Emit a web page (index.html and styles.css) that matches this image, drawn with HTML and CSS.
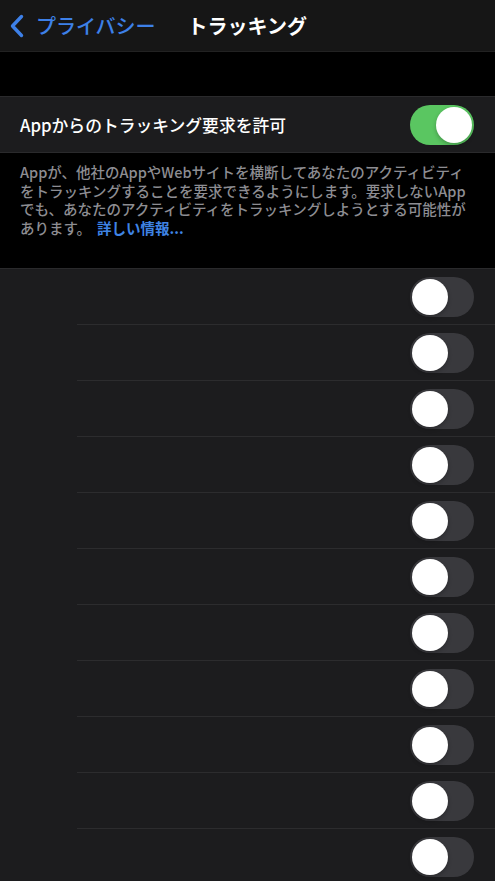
FILE: index.html
```html
<!DOCTYPE html>
<html lang="ja">
<head>
    <meta charset="UTF-8">
    <meta name="viewport" content="width=device-width, initial-scale=1.0">
    <title>トラッキング</title>
    <link rel="stylesheet" href="styles.css">
</head>
<body>
    <div class="navbar">
        <a class="back" href="#">
            <svg class="chevron" width="14" height="24" viewBox="0 0 14 24">
                <path d="M11.5 2.5 L2.5 12 L11.5 21.5" fill="none" stroke="#3d80e8" stroke-width="3.4" stroke-linecap="round" stroke-linejoin="round"/>
            </svg>
            <span>プライバシー</span>
        </a>
        <div class="title">トラッキング</div>
    </div>

    <div class="spacer"></div>

    <div class="group">
        <div class="row">
            <span class="label">Appからのトラッキング要求を許可</span>
            <div class="toggle on"><div class="knob"></div></div>
        </div>
    </div>

    <div class="note">
        Appが、他社のAppやWebサイトを横断してあなたのアクティビティをトラッキングすることを要求できるようにします。要求しないAppでも、あなたのアクティビティをトラッキングしようとする可能性があります。<a href="#">詳しい情報...</a>
    </div>

    <div class="group list" id="list"></div>

    <script>
        const list = document.getElementById("list");
        for (let i = 0; i < 11; i++) {
            const row = document.createElement("div");
            row.className = "row app";
            row.innerHTML = '<span class="label"></span><div class="toggle"><div class="knob"></div></div>';
            list.appendChild(row);
        }
    </script>
</body>
</html>
```

FILE: styles.css
```css
body {
    margin: 0;
    background-color: #000;
    font-family: "Noto Sans CJK JP", "Noto Sans", sans-serif;
    color: #fff;
    height: 881px;
    overflow: hidden;
}

.navbar {
    height: 51px;
    background-color: #161616;
    border-bottom: 1px solid #222;
    display: flex;
    align-items: center;
}

.back {
    display: flex;
    align-items: center;
    gap: 12px;
    padding-left: 10px;
    color: #3d80e8;
    text-decoration: none;
    font-size: 20px;
    font-weight: 500;
}

.title {
    margin-left: 32px;
    font-size: 20px;
    font-weight: 700;
}

.spacer {
    height: 44px;
}

.group {
    background-color: #1c1c1e;
    border-top: 1px solid #2a2a2c;
    border-bottom: 1px solid #2a2a2c;
}

.row {
    height: 55px;
    display: flex;
    align-items: center;
    justify-content: space-between;
    padding: 0 21px 0 20px;
}

.label {
    font-size: 16.8px;
    font-weight: 500;
}

.app {
    margin-left: 77px;
    padding-left: 0;
    border-bottom: 1px solid #2c2c2e;
}

.toggle {
    width: 64px;
    height: 40px;
    border-radius: 20px;
    background-color: #39393d;
    box-sizing: border-box;
    padding: 2px;
    display: flex;
}

.toggle.on {
    background-color: #5ac661;
    justify-content: flex-end;
}

.knob {
    width: 36px;
    height: 36px;
    border-radius: 50%;
    background-color: #fff;
    box-shadow: 0 2px 4px rgba(0, 0, 0, 0.25);
}

.note {
    height: 115px;
    box-sizing: border-box;
    padding: 10px 20px 0 20px;
    font-size: 14.5px;
    font-weight: 500;
    line-height: 18.6px;
    color: #8d8d92;
}

.note a {
    display: inline-block;
    margin-left: 6px;
    color: #3f84e5;
    text-decoration: none;
    font-weight: 700;
}
```
